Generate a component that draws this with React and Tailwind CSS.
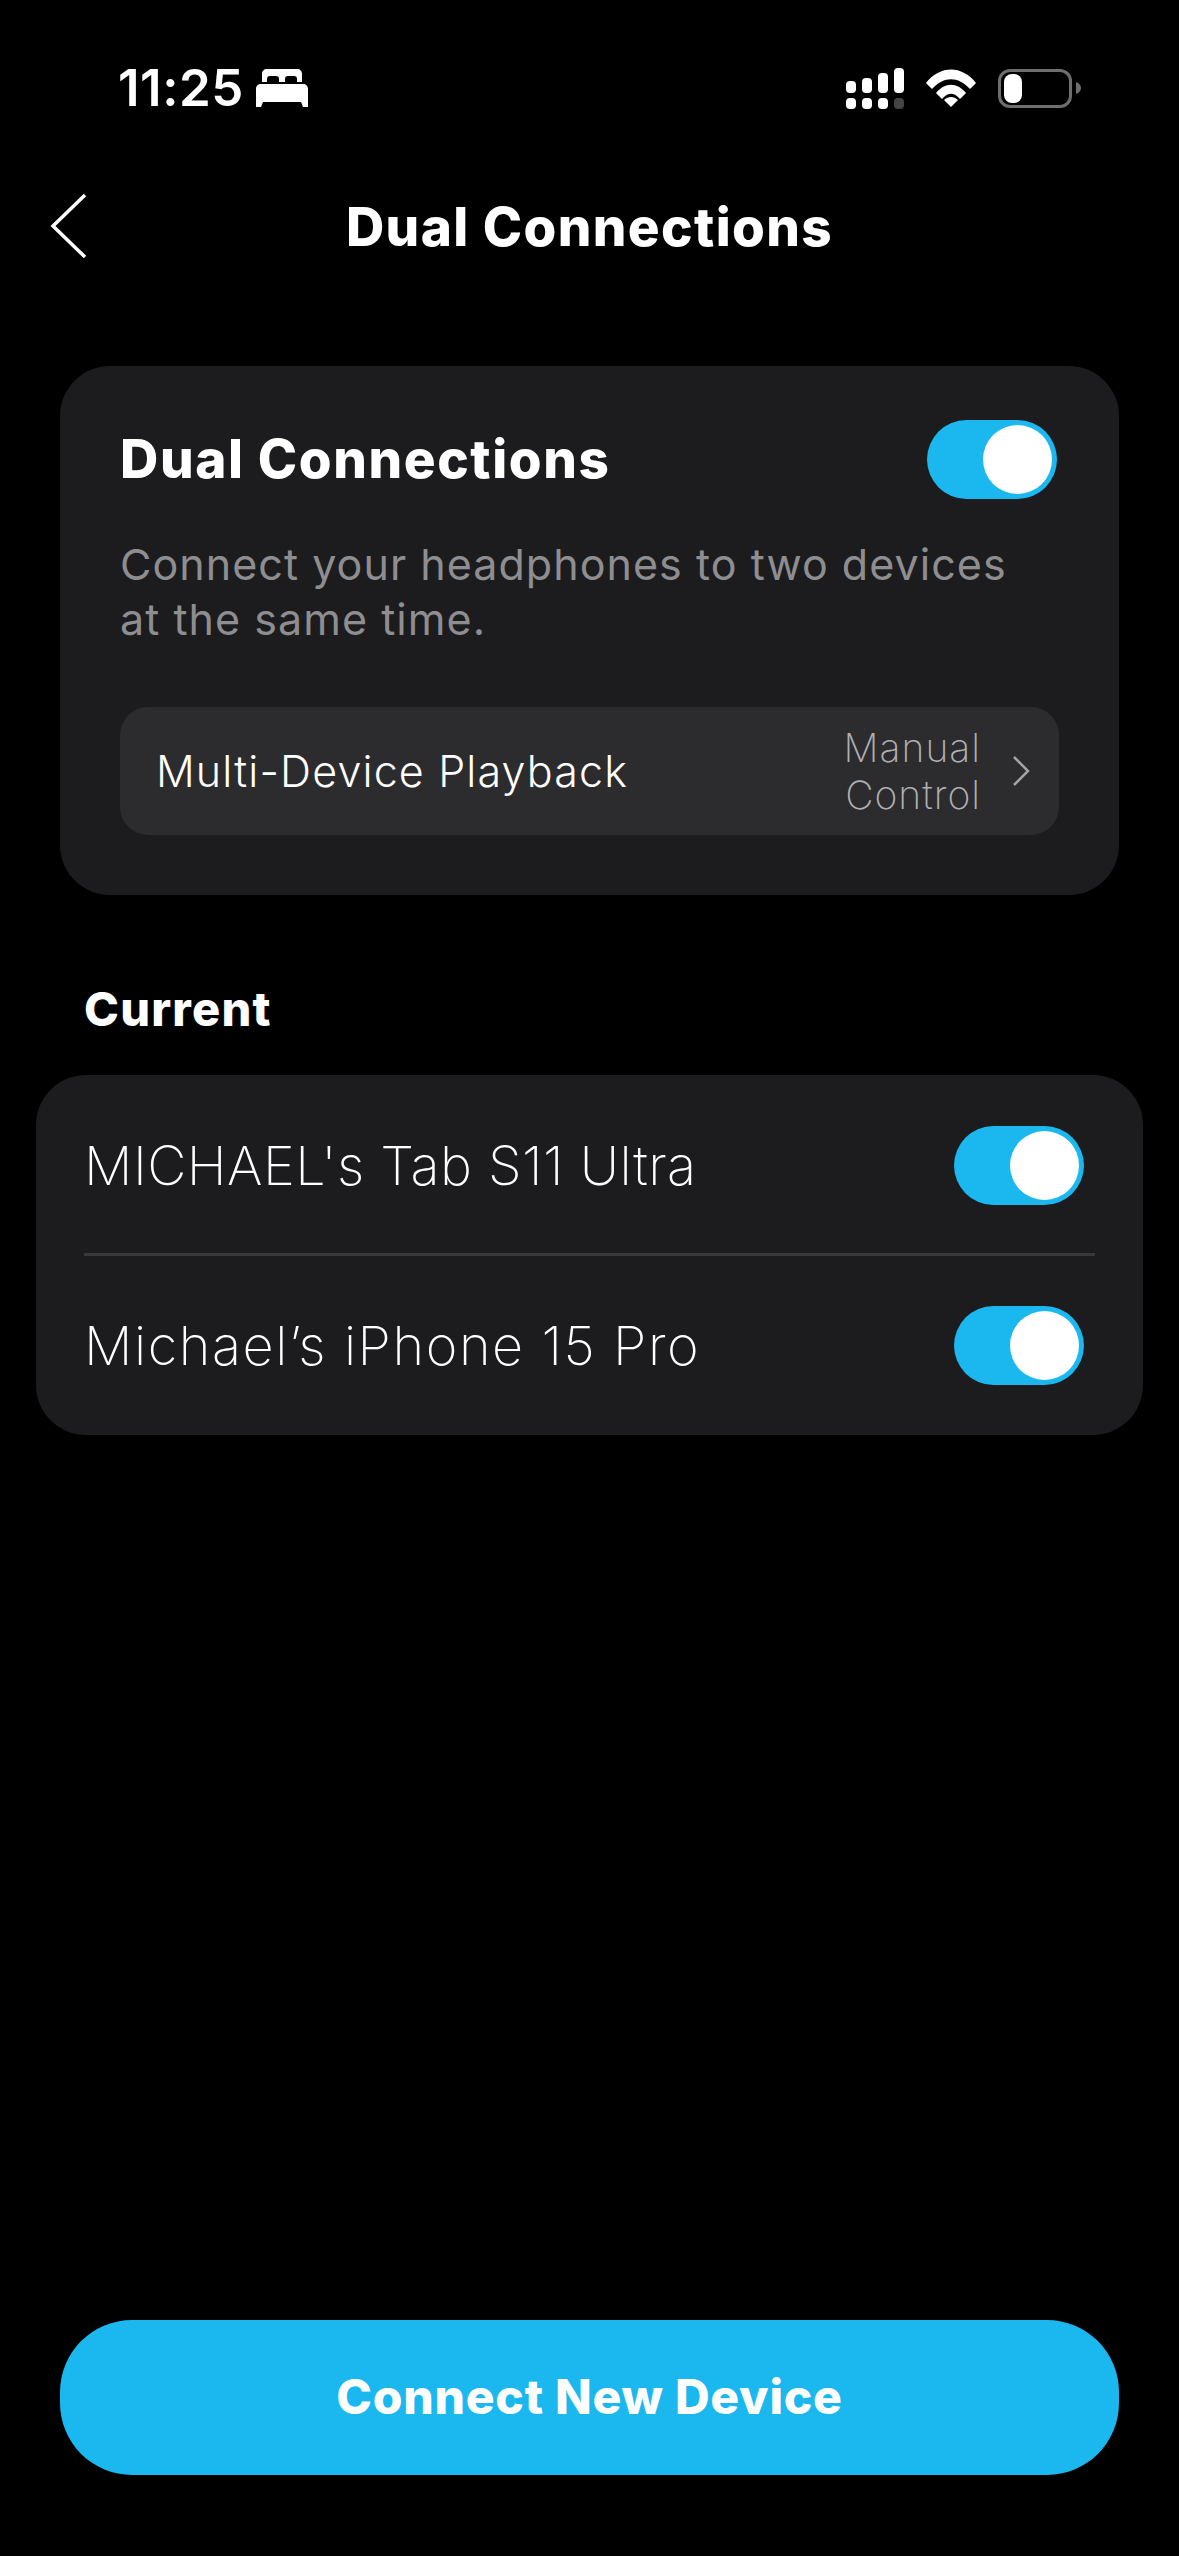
import React from 'react';

function Toggle() {
  return (
    <div className="flex h-[79px] w-[130px] shrink-0 items-center justify-end rounded-full bg-[#1bb8f0] pr-[5px]">
      <div className="h-[69px] w-[69px] rounded-full bg-white" />
    </div>
  );
}

function StatusIcons() {
  return (
    <div className="flex items-center">
      {/* signal */}
      <svg width="58" height="41" viewBox="0 0 58 41" fill="#fff">
        <rect x="0" y="13" width="10" height="12" rx="4" />
        <rect x="16" y="10" width="10" height="15" rx="4" />
        <rect x="32" y="5" width="10" height="20" rx="4" />
        <rect x="48" y="0" width="10" height="25" rx="4" />
        <rect x="0" y="30" width="10" height="11" rx="4" />
        <rect x="16" y="30" width="10" height="11" rx="4" />
        <rect x="32" y="30" width="10" height="11" rx="4" />
        <rect x="48" y="30" width="10" height="11" rx="4" fill="#444" />
      </svg>
      {/* wifi */}
      <svg className="ml-[22px]" width="50" height="38" viewBox="0 0 50 38" fill="#fff">
        <path d="M0 14 C14 -4 36 -4 50 14 L44 20 C32 7 18 7 6 20 Z" />
        <path d="M10 24 C19 13 31 13 40 24 L34 30 C28 23 22 23 16 30 Z" />
        <path d="M18 31 C22 27 28 27 32 31 L25 38 Z" />
      </svg>
      {/* battery */}
      <div className="ml-[22px] flex h-[39px] w-[74px] items-center rounded-[12px] border-[3px] border-[#6e6e6e] pl-[3px]">
        <div className="h-[29px] w-[18px] rounded-[8px] bg-white" />
      </div>
      <svg className="ml-[4px]" width="5" height="12" viewBox="0 0 5 12" fill="#6e6e6e">
        <path d="M0 0 C3 1 5 3 5 6 C5 9 3 11 0 12 Z" />
      </svg>
    </div>
  );
}

export default function App() {
  return (
    <div className="flex h-[2556px] w-[1179px] flex-col overflow-hidden bg-black font-['Inter',sans-serif] text-white">
      {/* Status bar */}
      <div className="flex items-center justify-between pl-[118px] pr-[98px] pt-[66px]">
        <div className="flex items-center">
          <span className="text-[51px] font-semibold leading-[44px] tracking-[0.5px]">11:25</span>
          <svg className="ml-[12px]" width="52" height="38" viewBox="0 0 52 38" fill="#fff">
            <path d="M6 13 V5 C6 2 8 0 11 0 H41 C44 0 46 2 46 5 V13 H41 V10 C41 8 40 7 38 7 H32 C30 7 29 8 29 10 V13 H23 V10 C23 8 22 7 20 7 H14 C12 7 11 8 11 10 V13 Z" />
            <path d="M5 15 H47 C50 15 52 17 52 20 V38 H47 L45 33 H7 L5 38 H0 V20 C0 17 2 15 5 15 Z" />
          </svg>
        </div>
        <StatusIcons />
      </div>

      {/* Header */}
      <div className="relative mt-[86px] flex h-[62px] items-center justify-center">
        <svg className="absolute left-[50px] top-[-2px]" width="37" height="64" viewBox="0 0 37 64" fill="none" stroke="#fff" strokeWidth="3.5">
          <path d="M35 1 L3 32 L35 63" />
        </svg>
        <h1 className="text-[53px] font-extrabold leading-none tracking-[1.4px]">Dual Connections</h1>
      </div>

      {/* Dual connections card */}
      <div className="mx-[60px] mt-[108px] rounded-[50px] bg-[#1c1c1e] pb-[60px] pl-[60px] pr-[60px] pt-[54px]">
        <div className="flex items-center justify-between">
          <h2 className="text-[53px] font-extrabold leading-none tracking-[1.6px]">Dual Connections</h2>
          <div className="mr-[2px]">
            <Toggle />
          </div>
        </div>
        <p className="mt-[38px] max-w-[910px] text-[43px] leading-[55px] tracking-[1.05px] text-[#8e8e91]">
          Connect your headphones to two devices at the same time.
        </p>
        <div className="mt-[60px] flex h-[128px] items-center rounded-[28px] bg-[#2c2c2e] pl-[36px] pr-[29px]">
          <span className="flex-1 text-[43px] font-light tracking-[1.15px]">Multi-Device Playback</span>
          <span className="w-[160px] text-right text-[39px] font-extralight leading-[47px] tracking-[1px] text-[#b0b0b2]">Manual Control</span>
          <svg className="ml-[31px]" width="18" height="30" viewBox="0 0 18 30" fill="none" stroke="#a5a5a7" strokeWidth="2.5">
            <path d="M2 1 L16 15 L2 29" />
          </svg>
        </div>
      </div>

      {/* Current devices */}
      <h3 className="ml-[84px] mt-[91px] text-[47px] font-extrabold leading-[46px] tracking-[1.2px]">Current</h3>
      <div className="mx-[36px] mt-[43px] rounded-[50px] bg-[#1c1c1e]">
        <div className="flex h-[178px] items-center justify-between pl-[48px] pr-[59px] pt-[3px]">
          <span className="text-[54px] font-extralight tracking-[0.45px]">MICHAEL's Tab S11 Ultra</span>
          <Toggle />
        </div>
        <div className="mx-[48px] h-[3px] bg-[#38383a]" />
        <div className="flex h-[179px] items-center justify-between pl-[48px] pr-[59px]">
          <span className="text-[54px] font-extralight tracking-[1.55px]">Michael’s iPhone 15 Pro</span>
          <Toggle />
        </div>
      </div>

      {/* Bottom button */}
      <button className="mx-[60px] mb-[81px] mt-auto flex h-[155px] items-center justify-center rounded-[72px] bg-[#1bb8f0] pb-[2px] text-[48px] font-extrabold tracking-[0.75px] text-white">
        Connect New Device
      </button>
    </div>
  );
}
